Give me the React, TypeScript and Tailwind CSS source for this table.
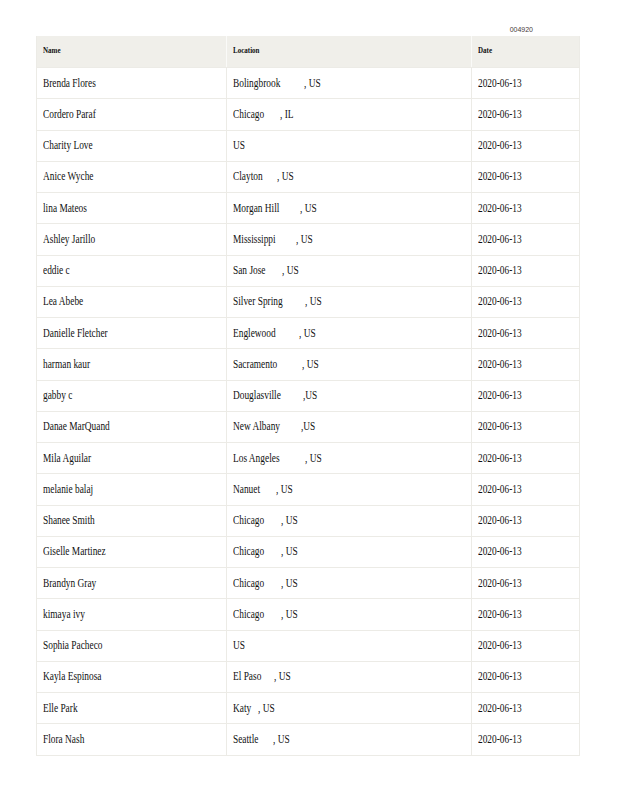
import React from "react";

type Row = { name: string; city: string; suffix?: string; commaX?: number };

const rows: Row[] = [
  { name: "Brenda Flores", city: "Bolingbrook", suffix: ", US", commaX: 303 },
  { name: "Cordero Paraf", city: "Chicago", suffix: ", IL", commaX: 279 },
  { name: "Charity Love", city: "US" },
  { name: "Anice Wyche", city: "Clayton", suffix: ", US", commaX: 276 },
  { name: "lina Mateos", city: "Morgan Hill", suffix: ", US", commaX: 299 },
  { name: "Ashley Jarillo", city: "Mississippi", suffix: ", US", commaX: 295 },
  { name: "eddie c", city: "San Jose", suffix: ", US", commaX: 281 },
  { name: "Lea Abebe", city: "Silver Spring", suffix: ", US", commaX: 304 },
  { name: "Danielle Fletcher", city: "Englewood", suffix: ", US", commaX: 298 },
  { name: "harman kaur", city: "Sacramento", suffix: ", US", commaX: 301 },
  { name: "gabby c", city: "Douglasville", suffix: ",US", commaX: 302 },
  { name: "Danae MarQuand", city: "New Albany", suffix: ",US", commaX: 300 },
  { name: "Mila Aguilar", city: "Los Angeles", suffix: ", US", commaX: 304 },
  { name: "melanie balaj", city: "Nanuet", suffix: ", US", commaX: 275 },
  { name: "Shanee Smith", city: "Chicago", suffix: ", US", commaX: 280 },
  { name: "Giselle Martinez", city: "Chicago", suffix: ", US", commaX: 280 },
  { name: "Brandyn Gray", city: "Chicago", suffix: ", US", commaX: 280 },
  { name: "kimaya ivy", city: "Chicago", suffix: ", US", commaX: 280 },
  { name: "Sophia Pacheco", city: "US" },
  { name: "Kayla Espinosa", city: "El Paso", suffix: ", US", commaX: 273 },
  { name: "Elle Park", city: "Katy", suffix: ", US", commaX: 257 },
  { name: "Flora Nash", city: "Seattle", suffix: ", US", commaX: 272 },
];

const SCALE = 0.78;

function Squeeze({ children, bold }: { children: React.ReactNode; bold?: boolean }) {
  return (
    <div
      className={
        "origin-left scale-x-[0.78] whitespace-nowrap text-[#111] " +
        (bold ? "text-[9px] font-bold" : "text-[12px]")
      }
    >
      {children}
    </div>
  );
}

function App() {
  return (
    <div className="min-h-screen bg-white pt-[24px] font-['Liberation_Serif',serif]">
      <div className="w-[544px] ml-[36px]">
        <div className="flex justify-end pr-[47px] h-[12px] items-center">
          <span className="font-['Liberation_Sans',sans-serif] text-[7px] text-[#4a3b3b]">
            004920
          </span>
        </div>
        <div className="border border-[#ecebe6] border-t-0">
          <div className="grid grid-cols-[190px_245px_1fr] h-[31px] bg-[#f0efea]">
            <div className="flex items-center pl-[6px] pb-[1px] border-r border-[#fafaf8]">
              <Squeeze bold>Name</Squeeze>
            </div>
            <div className="flex items-center pl-[6px] pb-[1px] border-r border-[#fafaf8]">
              <Squeeze bold>Location</Squeeze>
            </div>
            <div className="flex items-center pl-[6px] pb-[1px]">
              <Squeeze bold>Date</Squeeze>
            </div>
          </div>
          {rows.map((r, i) => (
            <div
              key={i}
              className="grid grid-cols-[190px_245px_1fr] h-[31.25px] border-t border-[#ecebe6]"
            >
              <div className="flex items-center pl-[6px] pb-[1px] border-r border-[#ecebe6]">
                <Squeeze>{r.name}</Squeeze>
              </div>
              <div className="flex items-center pl-[6px] pb-[1px] border-r border-[#ecebe6]">
                <Squeeze>
                  {r.suffix ? (
                    <span className="flex">
                      <span
                        className="inline-block"
                        style={{ width: ((r.commaX ?? 233) - 232) / SCALE }}
                      >
                        {r.city}
                      </span>
                      <span>{r.suffix}</span>
                    </span>
                  ) : (
                    r.city
                  )}
                </Squeeze>
              </div>
              <div className="flex items-center pl-[6px] pb-[1px]">
                <Squeeze>2020-06-13</Squeeze>
              </div>
            </div>
          ))}
        </div>
      </div>
    </div>
  );
}

export default App;
